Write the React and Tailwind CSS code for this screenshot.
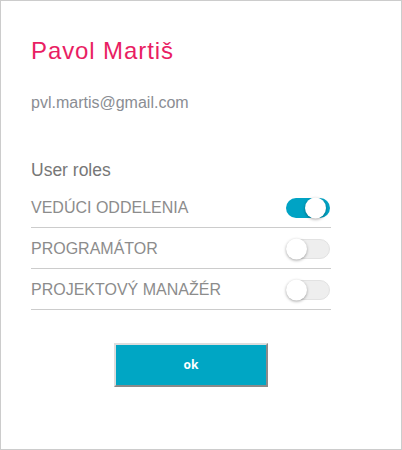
import React, { useState } from 'react';

const roles = ['VEDÚCI ODDELENIA', 'PROGRAMÁTOR', 'PROJEKTOVÝ MANAŽÉR'];

const Toggle = ({ on, onClick }) => (
  <button
    onClick={onClick}
    className={`relative w-[44px] h-[20px] rounded-full flex items-center ${
      on ? 'bg-[#00a3c4]' : 'bg-[#eeeeee] border border-[#e2e2e2]'
    }`}
  >
    <span
      className={`absolute top-1/2 -translate-y-1/2 w-[21px] h-[21px] rounded-full bg-white shadow-[0_1px_3px_rgba(0,0,0,0.35)] ${
        on ? 'left-[19px]' : 'left-[-1px]'
      }`}
    />
  </button>
);

const App = () => {
  const [active, setActive] = useState([true, false, false]);

  const flip = (i) => setActive(active.map((v, j) => (j === i ? !v : v)));

  return (
    <div className="w-[402px] h-[450px] bg-white border border-[#cccccc] font-['Liberation_Sans',Arial,sans-serif]">
      <div className="pl-[30px] pt-[36px] w-[330px]">
        <h1 className="text-[24px] leading-[28px] tracking-[0.9px] text-[#e91e63]">Pavol Martiš</h1>
        <p className="mt-[28px] text-[16px] leading-[19px] text-[#8a8d93]">pvl.martis@gmail.com</p>

        <h2 className="mt-[48px] text-[17.5px] leading-[20px] text-[#777777]">User roles</h2>
        <div className="mt-[7px]">
          {roles.map((role, i) => (
            <div key={role} className="h-[41px] flex items-center justify-between border-b border-[#cccccc] pt-[2px] pr-[1px]">
              <span className="text-[16px] text-[#8c8c8c]">{role}</span>
              <Toggle on={active[i]} onClick={() => flip(i)} />
            </div>
          ))}
        </div>

        <button className="mt-[33px] ml-[83px] w-[154px] h-[44px] bg-[#00a6c4] border-2 border-solid border-t-[#dddddd] border-l-[#dddddd] border-r-[#8a8a8a] border-b-[#8a8a8a] text-white text-[12px] font-bold font-['Open_Sans',sans-serif]">
          ok
        </button>
      </div>
    </div>
  );
};

export default App;
